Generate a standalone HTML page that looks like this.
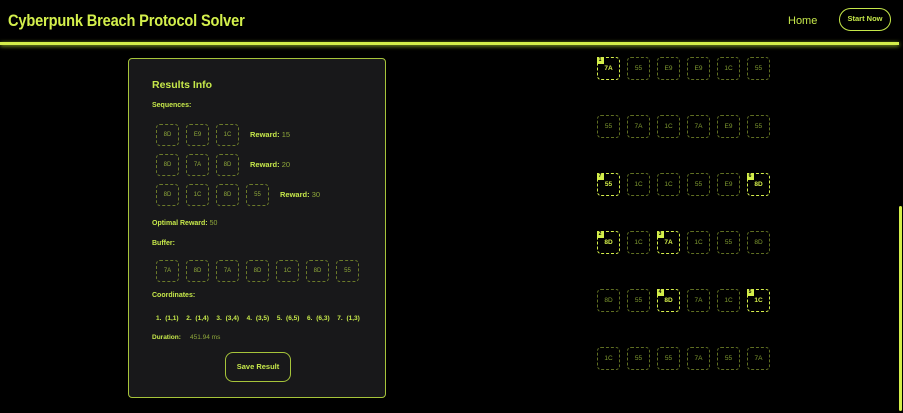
<!DOCTYPE html>
<html><head><meta charset="utf-8"><style>
*{box-sizing:border-box;margin:0;padding:0}
html,body{width:903px;height:413px;overflow:hidden;background:#000;font-family:"Liberation Sans",sans-serif;color:#c6e84a}
.hdr{position:absolute;left:0;top:0;width:903px;height:42px;background:#000}
.title{position:absolute;left:8px;top:11px;font-size:17px;font-weight:bold;color:#d4f04c;transform:scaleX(0.86);transform-origin:left;white-space:nowrap;letter-spacing:-0.2px}
.line{position:absolute;left:0;top:42px;width:899px;height:3px;background:#d4ee4a;box-shadow:0 1px 4px #9fbf30}
.home{position:absolute;left:788px;top:15px;font-size:11px;color:#c6e84a}
.start{position:absolute;left:839px;top:8px;width:52px;height:23px;border:1.5px solid #c6e84a;border-radius:12px;font-size:7.5px;font-weight:bold;color:#c6e84a;text-align:center;line-height:20px}
.panel{position:absolute;left:128px;top:58px;width:258px;height:340px;background:#18181a;border:1.5px solid #a6c43a;border-radius:4px}
.t{position:absolute;font-weight:bold;color:#c6e84a;white-space:nowrap}
.v{position:absolute;color:#8fa83a;white-space:nowrap;font-size:7.5px}
.c{position:absolute;width:23px;height:22px;border:1px dashed #6b7a2a;border-radius:4px;font-size:6px;color:#8fa83a;text-align:center;line-height:20px}
.g{position:absolute;width:23px;height:23px;border:1px dashed #5f6e22;border-radius:4px;font-size:6.5px;color:#7f9a30;text-align:center;line-height:21px}
.g.h{border:1.5px dashed #d4ee4a;color:#d4ee4a;font-weight:bold}
.g.h i{position:absolute;left:-1.5px;top:-1.5px;width:7px;height:7px;background:#d4ee4a;color:#000;font-size:5px;line-height:7px;font-style:normal}
.sb{position:absolute;left:899px;top:206px;width:3px;height:205px;background:#d4ee4a;border-radius:2px}
.btn{position:absolute;left:96px;top:293px;width:66px;height:30px;border:1.5px solid #a6c43a;border-radius:8px;font-size:7.5px;font-weight:bold;color:#c6e84a;text-align:center;line-height:27px}
</style></head><body>
<div class="hdr"><div class="title">Cyberpunk Breach Protocol Solver</div><div class="home">Home</div><div class="start">Start Now</div></div>
<div class="line"></div>
<div class="panel">
<div class="t" style="left:23px;top:20px;font-size:10.5px">Results Info</div>
<div class="t" style="left:23px;top:43px;font-size:7px">Sequences:</div>
<div class="c" style="left:27px;top:65px">8D</div><div class="c" style="left:57px;top:65px">E9</div><div class="c" style="left:87px;top:65px">1C</div>
<div class="t" style="left:121px;top:71px;font-size:7.5px">Reward: <span style="color:#8fa83a;font-weight:normal">15</span></div>
<div class="c" style="left:27px;top:95px">8D</div><div class="c" style="left:57px;top:95px">7A</div><div class="c" style="left:87px;top:95px">8D</div>
<div class="t" style="left:121px;top:101px;font-size:7.5px">Reward: <span style="color:#8fa83a;font-weight:normal">20</span></div>
<div class="c" style="left:27px;top:125px">8D</div><div class="c" style="left:57px;top:125px">1C</div><div class="c" style="left:87px;top:125px">8D</div><div class="c" style="left:117px;top:125px">55</div>
<div class="t" style="left:151px;top:131px;font-size:7.5px">Reward: <span style="color:#8fa83a;font-weight:normal">30</span></div>
<div class="t" style="left:23px;top:161px;font-size:7px">Optimal Reward: <span style="color:#8fa83a;font-weight:normal">50</span></div>
<div class="t" style="left:23px;top:181px;font-size:7px">Buffer:</div>
<div class="c" style="left:27px;top:201px">7A</div><div class="c" style="left:57px;top:201px">8D</div><div class="c" style="left:87px;top:201px">7A</div><div class="c" style="left:117px;top:201px">8D</div><div class="c" style="left:147px;top:201px">1C</div><div class="c" style="left:177px;top:201px">8D</div><div class="c" style="left:207px;top:201px">55</div>
<div class="t" style="left:23px;top:233px;font-size:7px">Coordinates:</div>
<div class="t" style="left:27px;top:256px;font-size:6.5px;word-spacing:2px">1. (1,1) &nbsp;2. (1,4) &nbsp;3. (3,4) &nbsp;4. (3,5) &nbsp;5. (6,5) &nbsp;6. (6,3) &nbsp;7. (1,3)</div>
<div class="t" style="left:23px;top:275px;font-size:6.5px">Duration:</div>
<div class="v" style="left:61px;top:275px;font-size:6.5px">451.94 ms</div>
<div class="btn">Save Result</div>
</div>
<div class="g h" style="left:597px;top:57px"><i>1</i>7A</div><div class="g" style="left:627px;top:57px">55</div><div class="g" style="left:657px;top:57px">E9</div><div class="g" style="left:687px;top:57px">E9</div><div class="g" style="left:717px;top:57px">1C</div><div class="g" style="left:747px;top:57px">55</div>
<div class="g" style="left:597px;top:115px">55</div><div class="g" style="left:627px;top:115px">7A</div><div class="g" style="left:657px;top:115px">1C</div><div class="g" style="left:687px;top:115px">7A</div><div class="g" style="left:717px;top:115px">E9</div><div class="g" style="left:747px;top:115px">55</div>
<div class="g h" style="left:597px;top:173px"><i>7</i>55</div><div class="g" style="left:627px;top:173px">1C</div><div class="g" style="left:657px;top:173px">1C</div><div class="g" style="left:687px;top:173px">55</div><div class="g" style="left:717px;top:173px">E9</div><div class="g h" style="left:747px;top:173px"><i>6</i>8D</div>
<div class="g h" style="left:597px;top:231px"><i>2</i>8D</div><div class="g" style="left:627px;top:231px">1C</div><div class="g h" style="left:657px;top:231px"><i>3</i>7A</div><div class="g" style="left:687px;top:231px">1C</div><div class="g" style="left:717px;top:231px">55</div><div class="g" style="left:747px;top:231px">8D</div>
<div class="g" style="left:597px;top:289px">8D</div><div class="g" style="left:627px;top:289px">55</div><div class="g h" style="left:657px;top:289px"><i>4</i>8D</div><div class="g" style="left:687px;top:289px">7A</div><div class="g" style="left:717px;top:289px">1C</div><div class="g h" style="left:747px;top:289px"><i>5</i>1C</div>
<div class="g" style="left:597px;top:347px">1C</div><div class="g" style="left:627px;top:347px">55</div><div class="g" style="left:657px;top:347px">55</div><div class="g" style="left:687px;top:347px">7A</div><div class="g" style="left:717px;top:347px">55</div><div class="g" style="left:747px;top:347px">7A</div>
<div class="sb"></div>
</body></html>
